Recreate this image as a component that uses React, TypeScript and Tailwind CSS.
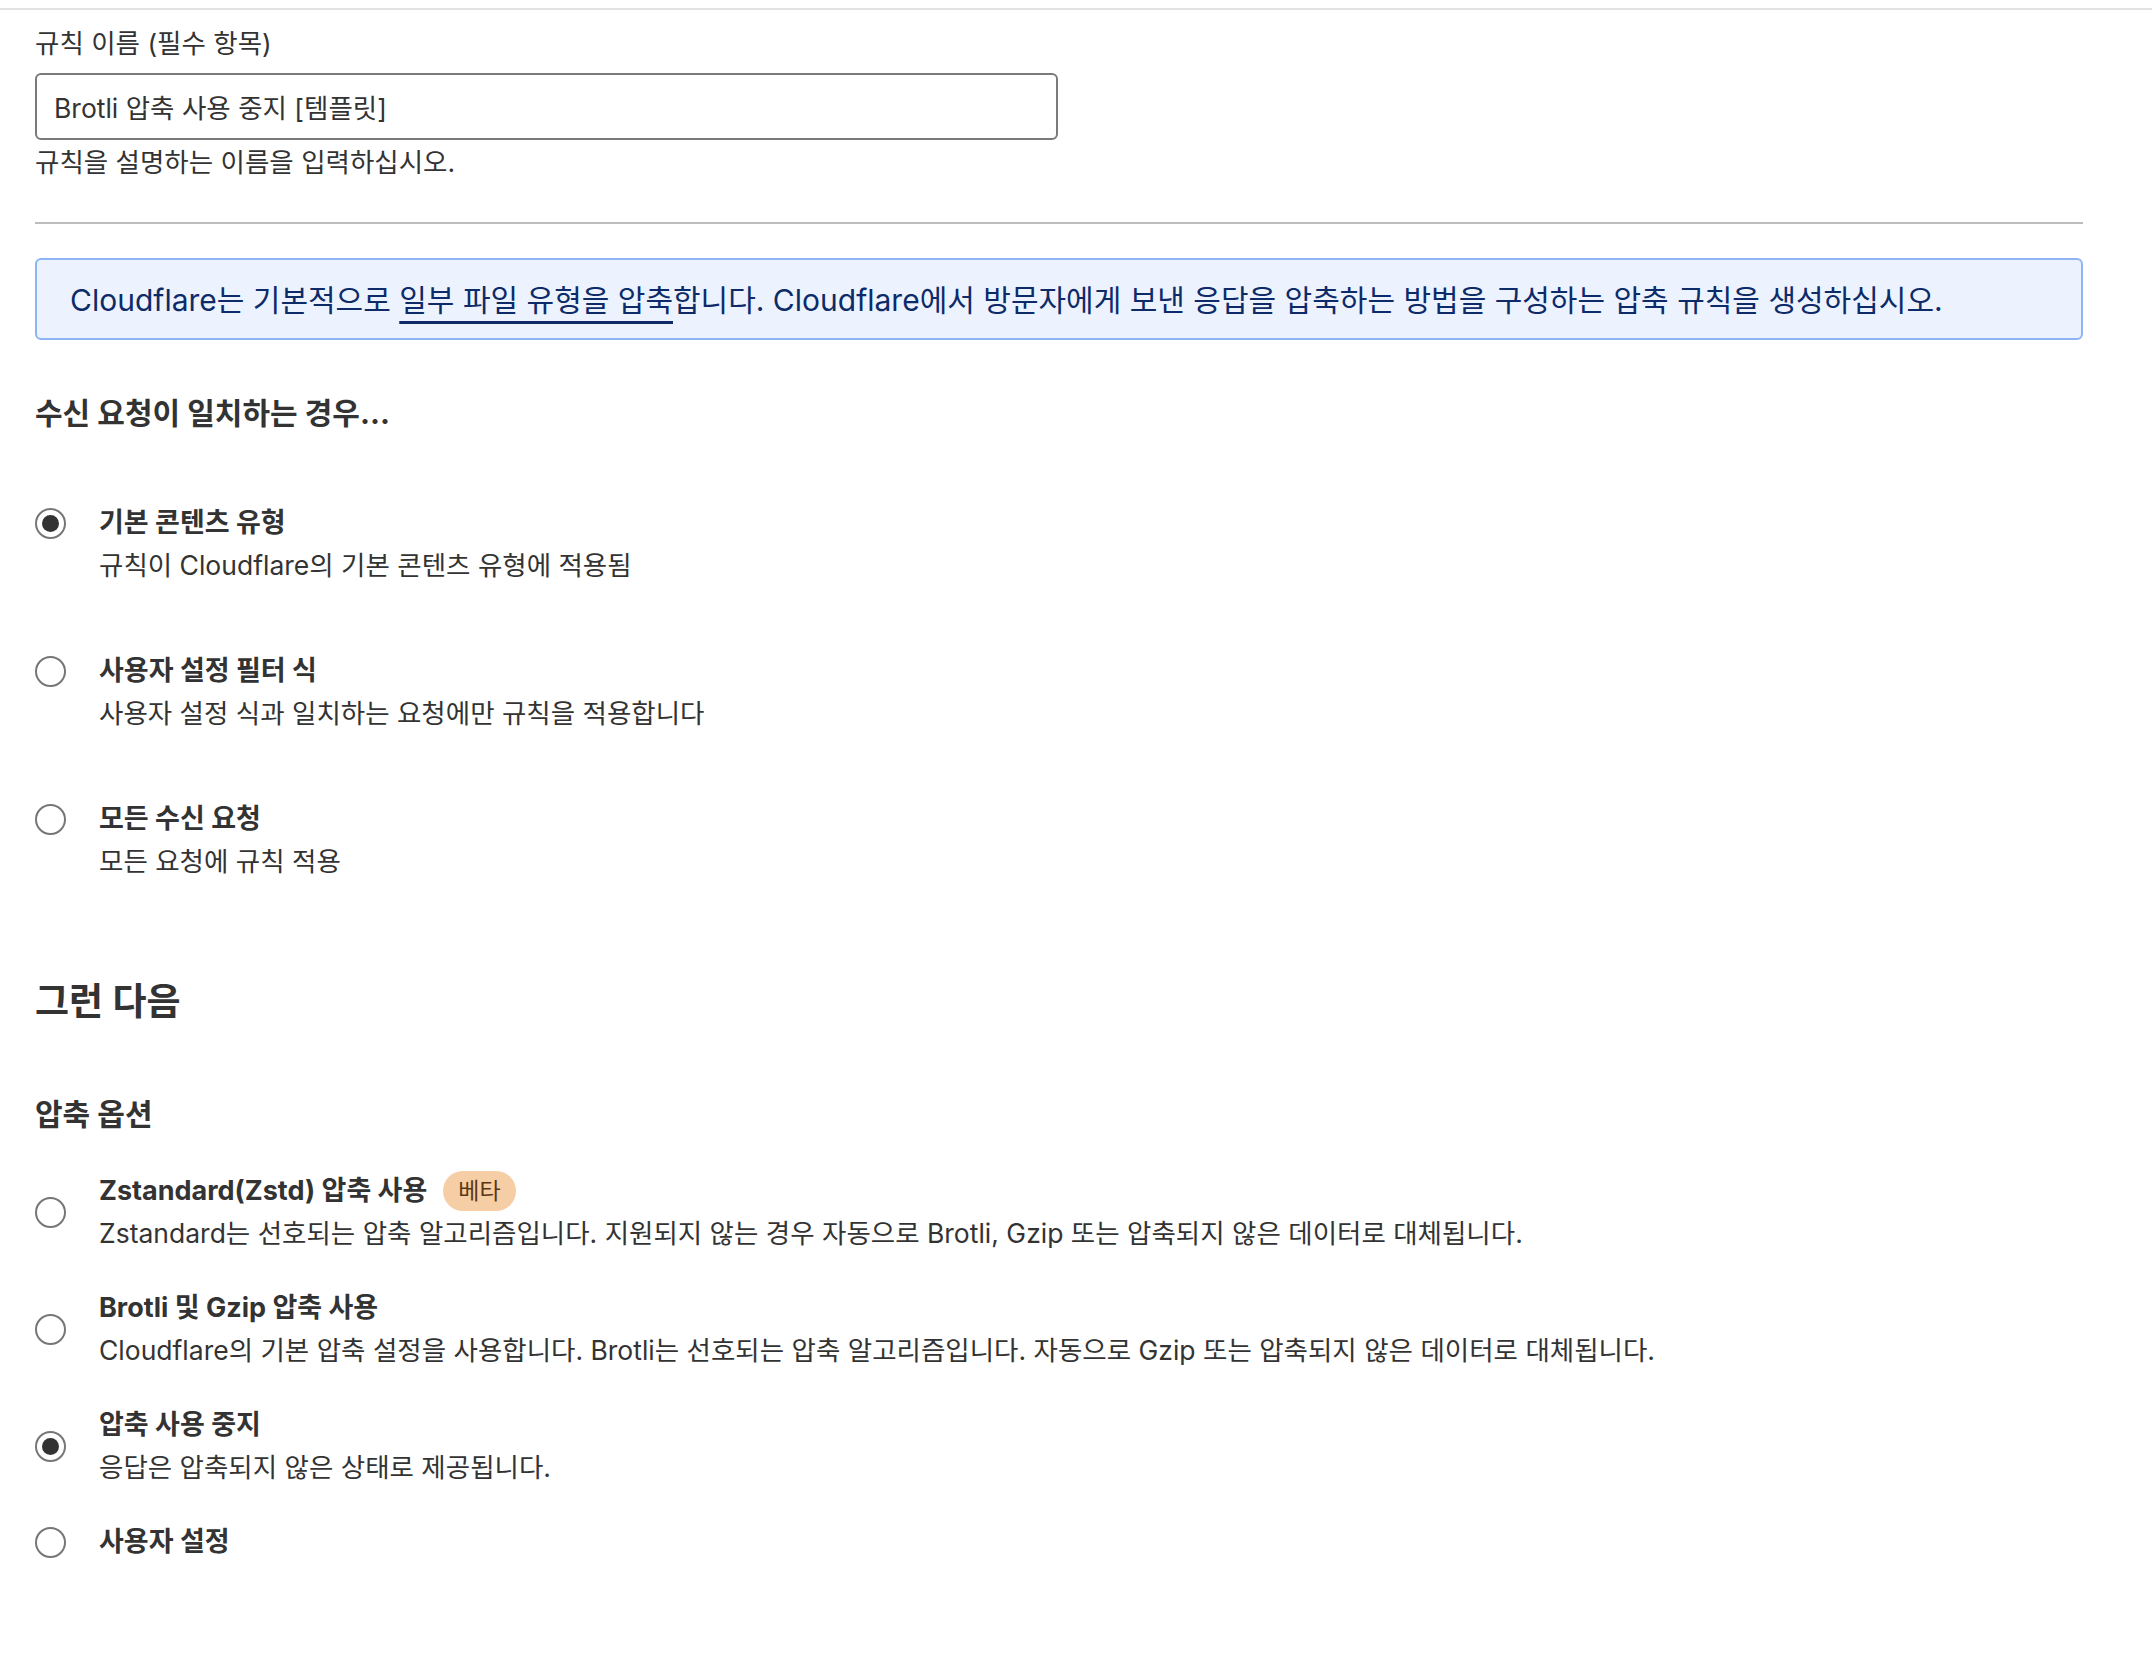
import { useState } from 'react';

interface Option {
  id: string;
  title: string;
  desc?: string;
  badge?: string;
}

const matchOptions: Option[] = [
  { id: 'default', title: '기본 콘텐츠 유형', desc: '규칙이 Cloudflare의 기본 콘텐츠 유형에 적용됨' },
  { id: 'custom', title: '사용자 설정 필터 식', desc: '사용자 설정 식과 일치하는 요청에만 규칙을 적용합니다' },
  { id: 'all', title: '모든 수신 요청', desc: '모든 요청에 규칙 적용' },
];

const compressionOptions: Option[] = [
  {
    id: 'zstd',
    title: 'Zstandard(Zstd) 압축 사용',
    badge: '베타',
    desc: 'Zstandard는 선호되는 압축 알고리즘입니다. 지원되지 않는 경우 자동으로 Brotli, Gzip 또는 압축되지 않은 데이터로 대체됩니다.',
  },
  {
    id: 'brotli',
    title: 'Brotli 및 Gzip 압축 사용',
    desc: 'Cloudflare의 기본 압축 설정을 사용합니다. Brotli는 선호되는 압축 알고리즘입니다. 자동으로 Gzip 또는 압축되지 않은 데이터로 대체됩니다.',
  },
  { id: 'disable', title: '압축 사용 중지', desc: '응답은 압축되지 않은 상태로 제공됩니다.' },
  { id: 'custom', title: '사용자 설정' },
];

function Radio({ checked }: { checked: boolean }) {
  return (
    <div className="w-[31px] h-[31px] rounded-full border-2 border-[#767676] flex items-center justify-center shrink-0">
      {checked && <div className="w-[17px] h-[17px] rounded-full bg-[#333]" />}
    </div>
  );
}

export default function App() {
  const [name, setName] = useState('Brotli 압축 사용 중지 [템플릿]');
  const [match, setMatch] = useState('default');
  const [compression, setCompression] = useState('disable');

  return (
    <div className="min-h-screen bg-white text-[#333] font-['Inter','Noto_Sans_CJK_KR',sans-serif] pt-2">
      <div className="h-[2px] bg-[#e2e2e2]" />
      <div className="pl-[35px] pr-[69px]">
        <label className="block mt-[15px] text-[26.5px] leading-[36px]">규칙 이름 (필수 항목)</label>
        <input
          value={name}
          onChange={(e) => setName(e.target.value)}
          className="mt-3 w-[1023px] h-[67px] px-[17px] border-2 border-[#7a7a7a] rounded-md text-[26.5px] text-[#333] outline-none"
        />
        <p className="mt-1 text-[26.5px] leading-[36px]">규칙을 설명하는 이름을 입력하십시오.</p>

        <div className="mt-[42px] h-[2px] bg-[#bdbdbd]" />

        <div className="mt-[34px] h-[82px] flex items-center px-[33px] border-2 border-[#8db5f4] bg-[#ecf3fe] rounded-md text-[30px] text-[#0d2b68]">
          <p className="mt-[2px]">
            Cloudflare는 기본적으로{' '}
            <span className="underline decoration-[3px] underline-offset-[10px]">일부 파일 유형을 압축</span>
            합니다. Cloudflare에서 방문자에게 보낸 응답을 압축하는 방법을 구성하는 압축 규칙을 생성하십시오.
          </p>
        </div>

        <h3 className="mt-[53px] text-[30px] leading-[40px] font-bold">수신 요청이 일치하는 경우...</h3>

        <div className="mt-[69px] flex flex-col gap-[64px]">
          {matchOptions.map((opt) => (
            <div key={opt.id} className="flex items-start cursor-pointer" onClick={() => setMatch(opt.id)}>
              <div className="h-[42px] flex items-center">
                <Radio checked={match === opt.id} />
              </div>
              <div className="ml-[33px]">
                <div className="text-[27px] leading-[42px] font-bold">{opt.title}</div>
                <div className="text-[26.5px] leading-[42px]">{opt.desc}</div>
              </div>
            </div>
          ))}
        </div>

        <h2 className="mt-[96px] text-[37px] leading-[48px] font-semibold">그런 다음</h2>

        <h3 className="mt-[68px] text-[30px] leading-[40px] font-bold">압축 옵션</h3>

        <div className="mt-[36px] flex flex-col gap-[33px]">
          {compressionOptions.map((opt) => (
            <div key={opt.id} className="flex items-center cursor-pointer" onClick={() => setCompression(opt.id)}>
              <Radio checked={compression === opt.id} />
              <div className="ml-[33px]">
                <div className="flex items-center text-[27px] leading-[42px] font-bold">
                  {opt.title}
                  {opt.badge && (
                    <span className="ml-4 h-[40px] px-[15px] rounded-full bg-[#f6cea6] text-[#5b3613] text-[23px] font-normal flex items-center">
                      {opt.badge}
                    </span>
                  )}
                </div>
                {opt.desc && <div className="text-[26.5px] leading-[42px]">{opt.desc}</div>}
              </div>
            </div>
          ))}
        </div>
      </div>
    </div>
  );
}
